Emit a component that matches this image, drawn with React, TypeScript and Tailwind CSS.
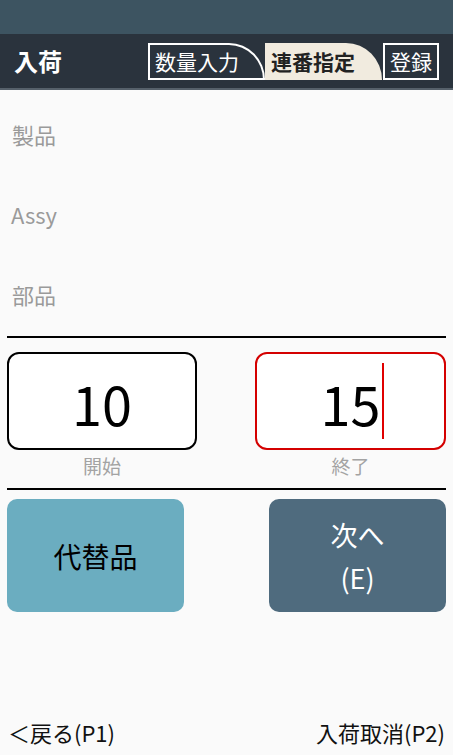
const font = { fontFamily: '"Noto Sans CJK JP", "Noto Sans", sans-serif' }

export default function App() {
  return (
    <div className="flex h-[755px] w-[453px] flex-col bg-[#fafafa]" style={font}>
      {/* status bar */}
      <div className="h-[34px] bg-[#3d5461]" />

      {/* header */}
      <div className="flex h-[56px] items-center border-b-2 border-[#56616b] bg-[#2a333d] pl-[14px]">
        <h1 className="text-[24px] font-bold leading-none text-white">入荷</h1>
        <div className="ml-[86px] flex h-[37px] items-stretch">
          <div className="flex w-[117px] items-center rounded-tr-[36px_37px] border-2 border-white pl-[5px] text-[21px] leading-none text-white">
            数量入力
          </div>
          <div className="flex w-[117px] items-center rounded-tr-[36px_37px] bg-[#f1ebdf] pl-[6px] text-[21px] font-bold leading-none text-[#222]">
            連番指定
          </div>
          <div className="ml-px flex w-[56px] items-center justify-center border-2 border-white text-[21px] leading-none text-white">
            登録
          </div>
        </div>
      </div>

      {/* item labels */}
      <div className="flex flex-col pt-[4px] text-[22px] leading-none text-[#9a9a9a]">
        <div className="flex h-[80px] items-center pl-[12px]">製品</div>
        <div className="flex h-[80px] items-center pl-[11px]">Assy</div>
        <div className="flex h-[80px] items-center pl-[12px]">部品</div>
      </div>

      <div className="mx-[7px] mt-[2px] h-[2px] bg-black" />

      {/* range inputs */}
      <div className="mx-[7px] mt-[14px] flex justify-between">
        <div className="flex w-[190px] flex-col items-center">
          <div className="flex h-[98px] w-full items-center justify-center rounded-[12px] border-2 border-black bg-white pt-[4px] text-[54px] leading-none text-black">
            10
          </div>
          <span className="mt-[4px] text-[19px] leading-[24px] text-[#a3a3a3]">開始</span>
        </div>
        <div className="flex w-[191px] flex-col items-center">
          <div className="flex h-[98px] w-full items-center justify-center rounded-[12px] border-2 border-[#d40000] bg-white text-[54px] leading-none text-black">
            <span className="pl-[4px] pt-[4px]">15</span>
            <span className="ml-[2px] h-[76px] w-[2px] bg-[#e00000]" />
          </div>
          <span className="mt-[4px] text-[19px] leading-[24px] text-[#a3a3a3]">終了</span>
        </div>
      </div>

      <div className="mx-[7px] mt-[10px] h-[2px] bg-black" />

      {/* actions */}
      <div className="mx-[7px] mt-[9px] flex justify-between">
        <button className="flex h-[113px] w-[177px] items-center justify-center rounded-[10px] bg-[#6badc0] text-[28px] text-black">
          代替品
        </button>
        <button className="flex h-[113px] w-[177px] flex-col items-center justify-center rounded-[10px] bg-[#4f6b7e] text-[27px] leading-[43px] text-white">
          <span>次へ</span>
          <span>(E)</span>
        </button>
      </div>

      {/* footer */}
      <div className="mt-auto flex h-[44px] items-center justify-between px-[8px] pb-[2px] text-[22px] text-[#111]">
        <span>＜戻る(P1)</span>
        <span>入荷取消(P2)</span>
      </div>
    </div>
  )
}
